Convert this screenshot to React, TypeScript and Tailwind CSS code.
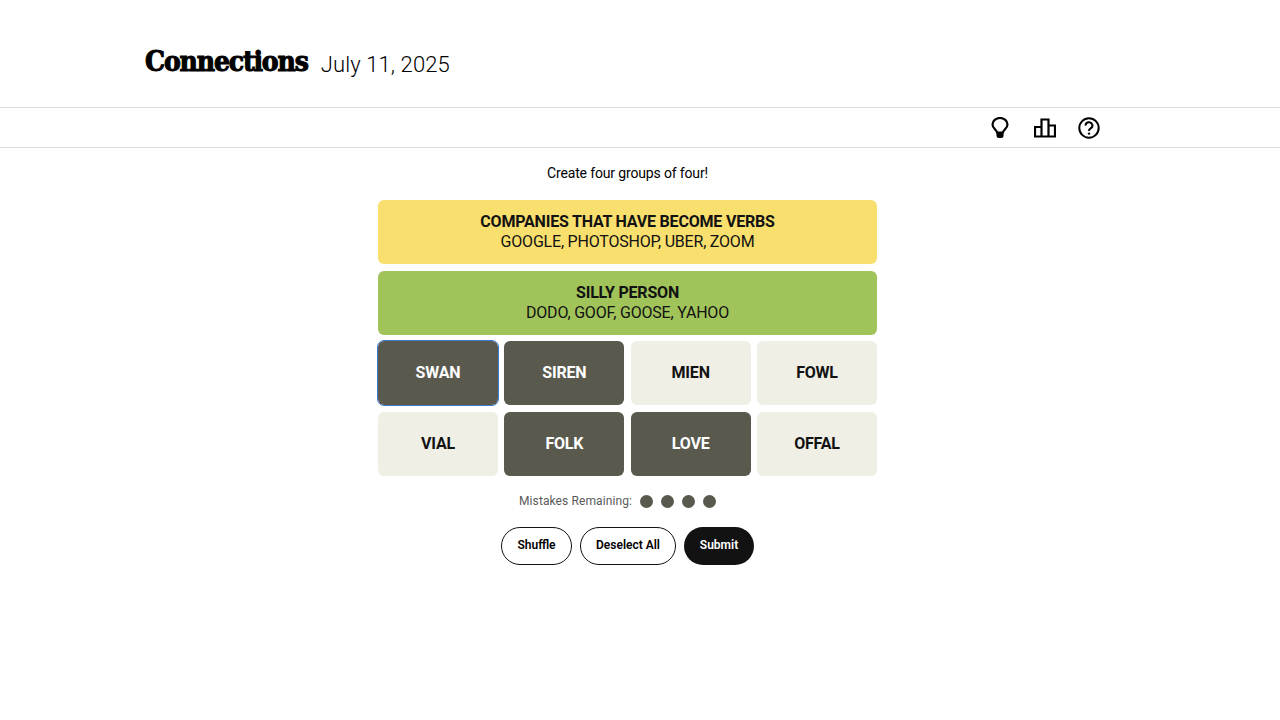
import React from 'react';

const solved = [
  { title: 'COMPANIES THAT HAVE BECOME VERBS', words: 'GOOGLE, PHOTOSHOP, UBER, ZOOM', color: 'bg-[#f9df6d]' },
  { title: 'SILLY PERSON', words: 'DODO, GOOF, GOOSE, YAHOO', color: 'bg-[#a0c35a]' },
];

const tiles = [
  { word: 'SWAN', on: true, focus: true },
  { word: 'SIREN', on: true },
  { word: 'MIEN' },
  { word: 'FOWL' },
  { word: 'VIAL' },
  { word: 'FOLK', on: true },
  { word: 'LOVE', on: true },
  { word: 'OFFAL' },
];

const BulbIcon = () => (
  <svg width="20" height="22" viewBox="0 0 20 22" fill="none" stroke="#000" strokeWidth="2.2">
    <path d="M7 15.5 C7 13 2.5 11.5 2.5 7.5 A7.5 6.5 0 0 1 17.5 7.5 C17.5 11.5 13 13 13 15.5 Z" />
    <path d="M6.5 16 h7 v2.5 q0 2.5 -2.5 2.5 h-2 q-2.5 0 -2.5 -2.5 Z" fill="#000" stroke="none" />
  </svg>
);

const StatsIcon = () => (
  <svg width="22" height="20" viewBox="0 0 22 20" fill="none" stroke="#000" strokeWidth="2.2">
    <path d="M1 18.5 V9 H7.5 V18.5 Z M7.5 18.5 V1.5 H14.5 V18.5 Z M14.5 18.5 V7.5 H21 V18.5 Z" />
  </svg>
);

const HelpIcon = () => (
  <svg width="22" height="22" viewBox="0 0 22 22" fill="none" stroke="#000" strokeWidth="2">
    <circle cx="11" cy="11" r="9.7" />
    <path d="M7.6 8.6 A3.4 3.2 0 1 1 12.6 11.3 C11.5 12 11 12.5 11 14" />
    <circle cx="11" cy="16.6" r="1.2" fill="#000" stroke="none" />
  </svg>
);

export default function App() {
  return (
    <div className="min-h-screen bg-white text-black font-['Roboto',sans-serif]">
      <header className="h-[108px] border-b border-[#dcdcdc] pl-[145px] pt-[43px] flex items-start">
        <h1 className="font-['DejaVu_Serif',serif] font-bold text-[28px] leading-[38px] tracking-[-1.15px] [font-stretch:condensed] [-webkit-text-stroke:1px_#000]">Connections</h1>
        <span className="ml-[13px] mt-[6px] text-[22px] leading-[32px] font-light tracking-[0.1px]">July 11, 2025</span>
      </header>

      <div className="h-[40px] border-b border-[#dcdcdc] flex items-center justify-end pr-[180px]">
        <BulbIcon />
        <div className="ml-[24px] mr-[22px]">
          <StatsIcon />
        </div>
        <HelpIcon />
      </div>

      <main className="w-[499px] ml-[378px] flex flex-col">
        <p className="mt-[15px] mb-[1px] h-[20px] leading-[20px] text-[14px] text-center tracking-[-0.15px]">Create four groups of four!</p>

        <div className="mt-[16px] flex flex-col gap-[7px]">
          {solved.map(group => (
            <div key={group.title} className={`h-[64px] rounded-md ${group.color} flex flex-col items-center justify-center text-[16px] leading-[20px] text-[#121212]`}>
              <strong className="font-bold tracking-[-0.2px]">{group.title}</strong>
              <span className="tracking-[-0.2px]">{group.words}</span>
            </div>
          ))}

          <div className="-mt-px grid grid-cols-4 gap-x-[6.33px] gap-y-[7px]">
            {tiles.map(tile => (
              <div
                key={tile.word}
                className={`h-[64px] rounded-md flex items-center justify-center text-[16px] font-bold tracking-[-0.2px] ${tile.on ? 'bg-[#5a594e] text-white' : 'bg-[#efefe6] text-[#121212]'} ${tile.focus ? 'outline outline-[#3b7bd4]' : ''}`}
              >
                {tile.word}
              </div>
            ))}
          </div>
        </div>

        <div className="mt-[16px] h-[18px] pr-[20px] flex items-center justify-center text-[12px] text-[#5a5a5a]">
          <span className="mr-[8px] tracking-[0.1px]">Mistakes Remaining:</span>
          <div className="flex gap-[8px]">
            <span className="w-[13px] h-[13px] rounded-full bg-[#5a594e]" />
            <span className="w-[13px] h-[13px] rounded-full bg-[#5a594e]" />
            <span className="w-[13px] h-[13px] rounded-full bg-[#5a594e]" />
            <span className="w-[13px] h-[13px] rounded-full bg-[#5a594e]" />
          </div>
        </div>

        <div className="mt-[17px] flex justify-center gap-[8px] text-[12px] font-semibold">
          <button className="w-[71px] h-[38px] pb-[2px] rounded-full border border-[#121212] bg-white">Shuffle</button>
          <button className="w-[96px] h-[38px] pb-[2px] rounded-full border border-[#121212] bg-white">Deselect All</button>
          <button className="w-[70px] h-[38px] pb-[2px] rounded-full bg-[#121212] text-white">Submit</button>
        </div>
      </main>
    </div>
  );
}
